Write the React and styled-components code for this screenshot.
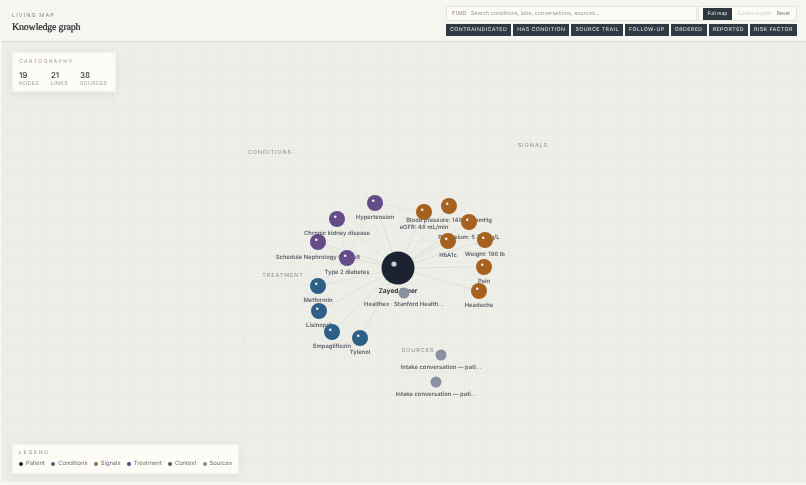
import React from "react";
import styled, { createGlobalStyle } from "styled-components";

const GlobalStyle = createGlobalStyle`
  html, body {
    margin: 0;
    padding: 0;
    background: #f7f6f1;
    overflow: hidden;
  }
  body {
    font-family: Inter, "Liberation Sans", sans-serif;
    text-rendering: geometricPrecision;
  }
`;

const Page = styled.div`
  width: 806px;
  height: 485px;
  padding: 1px 0 3px 2px;
  box-sizing: border-box;
  display: flex;
  flex-direction: column;
  filter: blur(0.35px);
`;
const Header = styled.header`
  height: 41px;
  flex: none;
  box-sizing: border-box;
  padding: 5px 9px 0 10px;
  display: flex;
  justify-content: space-between;
  background: #f6f5ef;
  border-bottom: 1px solid #dddcd4;
`;
const TitleBlock = styled.div`
  display: flex;
  flex-direction: column;
  padding-top: 7px;
  gap: 1px;
`;
const Eyebrow = styled.span`
  font-size: 5.5px;
  line-height: 7px;
  letter-spacing: 1.1px;
  color: #8c8b83;
`;
const Title = styled.h1`
  margin: 0;
  font-family: "Liberation Serif", serif;
  font-size: 10px;
  line-height: 14px;
  letter-spacing: -0.2px;
  font-weight: 400;
  color: #25282c;
  -webkit-text-stroke: 0.2px #25282c;
`;
const Controls = styled.div`
  width: 351px;
  display: flex;
  flex-direction: column;
  gap: 3px;
`;
const SearchBar = styled.div`
  height: 15px;
  display: flex;
  gap: 1px;
`;
const SearchField = styled.div`
  width: 251px;
  box-sizing: border-box;
  display: flex;
  align-items: center;
  gap: 4px;
  padding: 0 5px;
  background: #fcfbf6;
  border: 1px solid #e6e5dc;
`;
const FindLabel = styled.span`
  font-size: 5.5px;
  letter-spacing: 0.5px;
  color: #8a8478;
`;
const SearchHint = styled.span`
  font-size: 5.5px;
  color: #9d9c94;
`;
const ModeGroup = styled.div`
  flex: 1;
  box-sizing: border-box;
  display: flex;
  align-items: center;
  justify-content: space-between;
  padding: 0 6px 0 4px;
  background: #fcfbf6;
  border: 1px solid #e6e5dc;
`;
const ModeButton = styled.span`
  font-size: 5px;
  line-height: 12px;
  height: 12px;
  white-space: nowrap;
  padding: 0 ${(p) => p.$pad}px;
  background: ${(p) => (p.$active ? "#2d3740" : "transparent")};
  color: ${(p) => p.$color};
`;
const ChipRow = styled.div`
  display: flex;
  justify-content: space-between;
`;
const Chip = styled.span`
  height: 12px;
  line-height: 12px;
  padding: 0 4px;
  font-size: 5.3px;
  font-weight: 500;
  letter-spacing: 0.42px;
  background: #2f3b44;
  color: #d4d8d8;
  white-space: nowrap;
`;
const Canvas = styled.main`
  position: relative;
  flex: 1;
  overflow: hidden;
  background-color: #eeeee8;
  background-image:
    linear-gradient(#eaeae3 1px, transparent 1px),
    linear-gradient(90deg, #eaeae3 1px, transparent 1px);
  background-size: 22px 22px;
`;
const GraphSvg = styled.svg`
  position: absolute;
  left: -2px;
  top: -42px;
  width: 806px;
  height: 485px;
`;
const Panel = styled.aside`
  position: absolute;
  left: 10px;
  box-sizing: border-box;
  background: #fcfbf6;
  border: 1px solid #f3f2ec;
  box-shadow: 0 2px 8px rgba(60, 60, 50, 0.08);
`;
const StatsPanel = styled(Panel)`
  top: 10px;
  width: 104px;
  height: 40px;
  padding: 6px 6px;
`;
const PanelTitle = styled.div`
  font-size: 5.3px;
  line-height: 7px;
  letter-spacing: ${(p) => p.$spacing}px;
  color: ${(p) => p.$color};
`;
const Stats = styled.div`
  display: flex;
  gap: 12px;
  margin-top: 4px;
`;
const Stat = styled.div`
  display: flex;
  flex-direction: column;
`;
const StatValue = styled.span`
  font-size: 8px;
  font-weight: 500;
  line-height: 10px;
  color: #3b3d40;
`;
const StatLabel = styled.span`
  font-size: 5px;
  line-height: 8px;
  letter-spacing: 0.5px;
  color: #9c9b93;
`;
const LegendPanel = styled(Panel)`
  bottom: 8px;
  width: 227px;
  height: 30px;
  padding: 5px 6px;
`;
const LegendRow = styled.div`
  display: flex;
  justify-content: space-between;
  margin-top: 3px;
`;
const LegendItem = styled.span`
  display: flex;
  align-items: center;
  gap: 3px;
  font-size: 5.8px;
  line-height: 8px;
  color: #6e6f72;
`;
const Dot = styled.i`
  width: 4px;
  height: 4px;
  border-radius: 50%;
  background: ${(p) => p.$color};
`;
const GroupLabel = styled.text`
  font-family: Inter, "Liberation Sans", sans-serif;
  font-size: 5.4px;
  letter-spacing: 1px;
  fill: #8f8f87;
  text-anchor: middle;
`;
const NodeLabel = styled.text`
  font-family: Inter, "Liberation Sans", sans-serif;
  font-size: ${(p) => (p.$big ? 6.6 : 5.85)}px;
  font-weight: ${(p) => (p.$big ? 700 : 600)};
  fill: ${(p) => (p.$big ? "#3c4048" : "#5f636b")};
  text-anchor: middle;
`;

const PURPLE = "#644c88";
const ORANGE = "#a6611f";
const BLUE = "#2e5f86";
const SLATE = "#8a90a0";
const INK = "#1b2333";

const nodes = [
  { x: 375, y: 203, label: "Hypertension", ly: 217, c: PURPLE },
  { x: 337, y: 219, label: "Chronic kidney disease", ly: 233, c: PURPLE },
  { x: 318, y: 242, label: "Schedule Nephrology Consult", ly: 257, c: PURPLE },
  { x: 347, y: 258, label: "Type 2 diabetes", ly: 272, c: PURPLE },
  { x: 318, y: 286, label: "Metformin", ly: 300, c: BLUE },
  { x: 319, y: 311, label: "Lisinopril", ly: 325, c: BLUE },
  { x: 332, y: 332, label: "Empagliflozin", ly: 346, c: BLUE },
  { x: 360, y: 338, label: "Tylenol", ly: 352, c: BLUE },
  { x: 424, y: 212, label: "eGFR: 48 mL/min", ly: 227, c: ORANGE },
  { x: 449, y: 206, label: "Blood pressure: 148/92 mmHg", ly: 220, c: ORANGE },
  { x: 469, y: 222, label: "Potassium: 5.3 mEq/L", ly: 237, c: ORANGE },
  { x: 448, y: 241, label: "HbA1c", ly: 255, c: ORANGE },
  { x: 485, y: 240, label: "Weight: 196 lb", ly: 254, c: ORANGE },
  { x: 484, y: 267, label: "Pain", ly: 281, c: ORANGE },
  { x: 479, y: 291, label: "Headache", ly: 305, c: ORANGE },
  { x: 404, y: 293, r: 5.5, label: "Healthex · Stanford Health...", ly: 304, c: SLATE, plain: true },
  { x: 441, y: 355, r: 5.5, label: "Intake conversation — pati...", ly: 367, c: SLATE, plain: true, loose: true },
  { x: 436, y: 382, r: 5.5, label: "Intake conversation — pati...", ly: 394, c: SLATE, plain: true, loose: true },
];

const patient = { x: 398, y: 268 };

const crossLinks = [
  [3, 1],
  [3, 2],
  [4, 3],
  [8, 0],
  [11, 9],
  [0, 3],
];

const rings = [
  { x: 340, y: 235, r: 92 },
  { x: 470, y: 245, r: 115 },
  { x: 345, y: 310, r: 105 },
  { x: 430, y: 375, r: 95 },
];

const chips = [
  "CONTRAINDICATED",
  "HAS CONDITION",
  "SOURCE TRAIL",
  "FOLLOW-UP",
  "ORDERED",
  "REPORTED",
  "RISK FACTOR",
];

const stats = [
  ["19", "NODES"],
  ["21", "LINKS"],
  ["38", "SOURCES"],
];

const legend = [
  ["Patient", INK],
  ["Conditions", "#5f5a80"],
  ["Signals", "#a0703c"],
  ["Treatment", "#36557a"],
  ["Context", "#4e5f5c"],
  ["Sources", "#8a8c90"],
];

const groups = [
  ["CONDITIONS", 270, 154],
  ["SIGNALS", 533, 147],
  ["TREATMENT", 283, 277],
  ["SOURCES", 418, 352],
];

const Graph = () => (
  <GraphSvg viewBox="0 0 806 485">
    {rings.map((g, i) => (
      <circle key={i} cx={g.x} cy={g.y} r={g.r} fill="none" stroke="#e3e3db" strokeWidth="0.7" strokeDasharray="1 4" />
    ))}
    {nodes.filter((n) => !n.loose).map((n, i) => (
      <line key={i} x1={patient.x} y1={patient.y} x2={n.x} y2={n.y} stroke="#dcdcd5" strokeWidth="0.8" />
    ))}
    {crossLinks.map(([a, b], i) => (
      <line key={i} x1={nodes[a].x} y1={nodes[a].y} x2={nodes[b].x} y2={nodes[b].y} stroke="#dedfd8" strokeWidth="0.7" />
    ))}
    {groups.map(([name, x, y]) => (
      <GroupLabel key={name} x={x} y={y}>{name}</GroupLabel>
    ))}
    {nodes.map((n, i) => (
      <NodeLabel key={i} x={n.x} y={n.ly + 2}>{n.label}</NodeLabel>
    ))}
    <NodeLabel $big x={patient.x} y={292.5}>Zayed Umer</NodeLabel>
    <circle cx={patient.x} cy={patient.y} r="16.5" fill={INK} />
    <circle cx={patient.x - 4} cy={patient.y - 4} r="2.6" fill="#c9ccd2" />
    {nodes.map((n, i) => (
      <g key={i}>
        <circle cx={n.x} cy={n.y} r={n.r || 8} fill={n.c} />
        {!n.plain && <circle cx={n.x - 1.8} cy={n.y - 2.2} r="1.3" fill="#f2efe8" />}
      </g>
    ))}
  </GraphSvg>
);

export default function App() {
  return (
    <>
      <GlobalStyle />
      <Page>
        <Header>
          <TitleBlock>
            <Eyebrow>LIVING MAP</Eyebrow>
            <Title>Knowledge graph</Title>
          </TitleBlock>
          <Controls>
            <SearchBar>
              <SearchField>
                <FindLabel>FIND</FindLabel>
                <SearchHint>Search conditions, labs, conversations, sources...</SearchHint>
              </SearchField>
              <ModeGroup>
                <ModeButton $active $pad={4.5} $color="#e8e8e4">Full map</ModeButton>
                <ModeButton $pad={0} $color="#d0cfc8">Evidence path</ModeButton>
                <ModeButton $pad={0} $color="#6e6e68">Reset</ModeButton>
              </ModeGroup>
            </SearchBar>
            <ChipRow>
              {chips.map((c) => (
                <Chip key={c}>{c}</Chip>
              ))}
            </ChipRow>
          </Controls>
        </Header>
        <Canvas>
          <Graph />
          <StatsPanel>
            <PanelTitle $color="#a39c8a" $spacing={1.3}>CARTOGRAPHY</PanelTitle>
            <Stats>
              {stats.map(([v, l]) => (
                <Stat key={l}>
                  <StatValue>{v}</StatValue>
                  <StatLabel>{l}</StatLabel>
                </Stat>
              ))}
            </Stats>
          </StatsPanel>
          <LegendPanel>
            <PanelTitle $color="#8f8e86" $spacing={1.6}>LEGEND</PanelTitle>
            <LegendRow>
              {legend.map(([l, c]) => (
                <LegendItem key={l}>
                  <Dot $color={c} />
                  {l}
                </LegendItem>
              ))}
            </LegendRow>
          </LegendPanel>
        </Canvas>
      </Page>
    </>
  );
}
